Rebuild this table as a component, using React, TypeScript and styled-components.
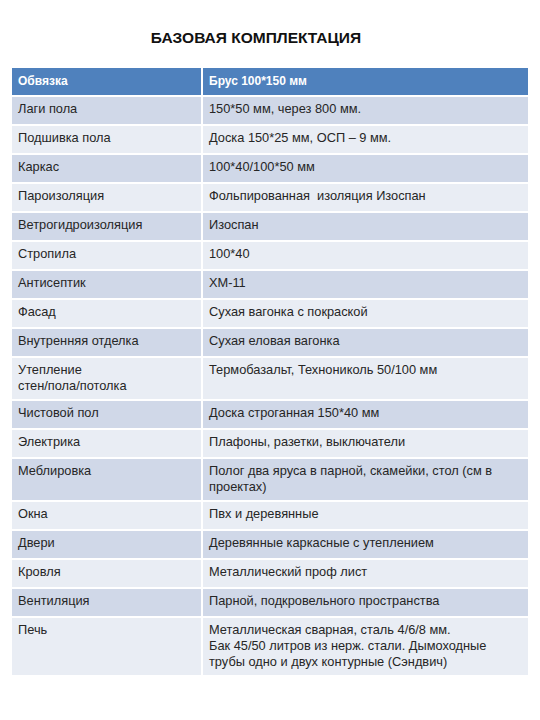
import React from "react";
import styled, { createGlobalStyle } from "styled-components";

const Global = createGlobalStyle`
  html, body { margin: 0; padding: 0; background: #ffffff; }
  body { font-family: "Liberation Sans", Arial, sans-serif; color: #1a1a1a; }
`;

const Page = styled.div`
  width: 540px;
  padding: 29px 12px 0 12px;
  box-sizing: border-box;
  display: flex;
  flex-direction: column;
`;

const Title = styled.h1`
  margin: 0 0 21px 0;
  padding-right: 28px;
  font-size: 15.5px;
  line-height: 18px;
  font-weight: 700;
  text-align: center;
  color: #111;
`;

const Table = styled.div`
  width: 516px;
  display: grid;
  grid-template-columns: 189px 1fr;
  column-gap: 2px;
  row-gap: 2px;
`;

const Cell = styled.div<{ $tone: "head" | "dark" | "light" }>`
  padding: 4px 6px 5px 6px;
  font-size: ${(p) => (p.$tone === "head" ? "12px" : "12.8px")};
  line-height: 16px;
  min-height: 18px;
  display: flex;
  align-items: ${(p) => (p.$tone === "head" ? "center" : "flex-start")};
  background: ${(p) =>
    p.$tone === "head" ? "#4f81bd" : p.$tone === "dark" ? "#d0d8e8" : "#e9edf4"};
  color: ${(p) => (p.$tone === "head" ? "#ffffff" : "#262626")};
  font-weight: ${(p) => (p.$tone === "head" ? 700 : 400)};
  white-space: pre-wrap;
`;

const rows: [string, string][] = [
  ["Лаги пола", "150*50 мм, через 800 мм."],
  ["Подшивка пола", "Доска 150*25 мм, ОСП – 9 мм."],
  ["Каркас", "100*40/100*50 мм"],
  ["Пароизоляция", "Фольпированная  изоляция Изоспан"],
  ["Ветрогидроизоляция", "Изоспан"],
  ["Стропила", "100*40"],
  ["Антисептик", "ХМ-11"],
  ["Фасад", "Сухая вагонка с покраской"],
  ["Внутренняя отделка", "Сухая еловая вагонка"],
  ["Утепление\nстен/пола/потолка", "Термобазальт, Технониколь 50/100 мм"],
  ["Чистовой пол", "Доска строганная 150*40 мм"],
  ["Электрика", "Плафоны, разетки, выключатели"],
  ["Меблировка", "Полог два яруса в парной, скамейки, стол (см в\nпроектах)"],
  ["Окна", "Пвх и деревянные"],
  ["Двери", "Деревянные каркасные с утеплением"],
  ["Кровля", "Металлический проф лист"],
  ["Вентиляция", "Парной, подкровельного пространства"],
  [
    "Печь",
    "Металлическая сварная, сталь 4/6/8 мм.\nБак 45/50 литров из нерж. стали. Дымоходные\nтрубы одно и двух контурные (Сэндвич)",
  ],
];

export default function App() {
  return (
    <>
      <Global />
      <Page>
        <Title>БАЗОВАЯ КОМПЛЕКТАЦИЯ</Title>
        <Table>
          <Cell $tone="head">Обвязка</Cell>
          <Cell $tone="head">Брус 100*150 мм</Cell>
          {rows.map(([a, b], i) => {
            const tone = i % 2 === 0 ? "dark" : "light";
            return (
              <React.Fragment key={i}>
                <Cell $tone={tone}>{a}</Cell>
                <Cell $tone={tone}>{b}</Cell>
              </React.Fragment>
            );
          })}
        </Table>
      </Page>
    </>
  );
}
